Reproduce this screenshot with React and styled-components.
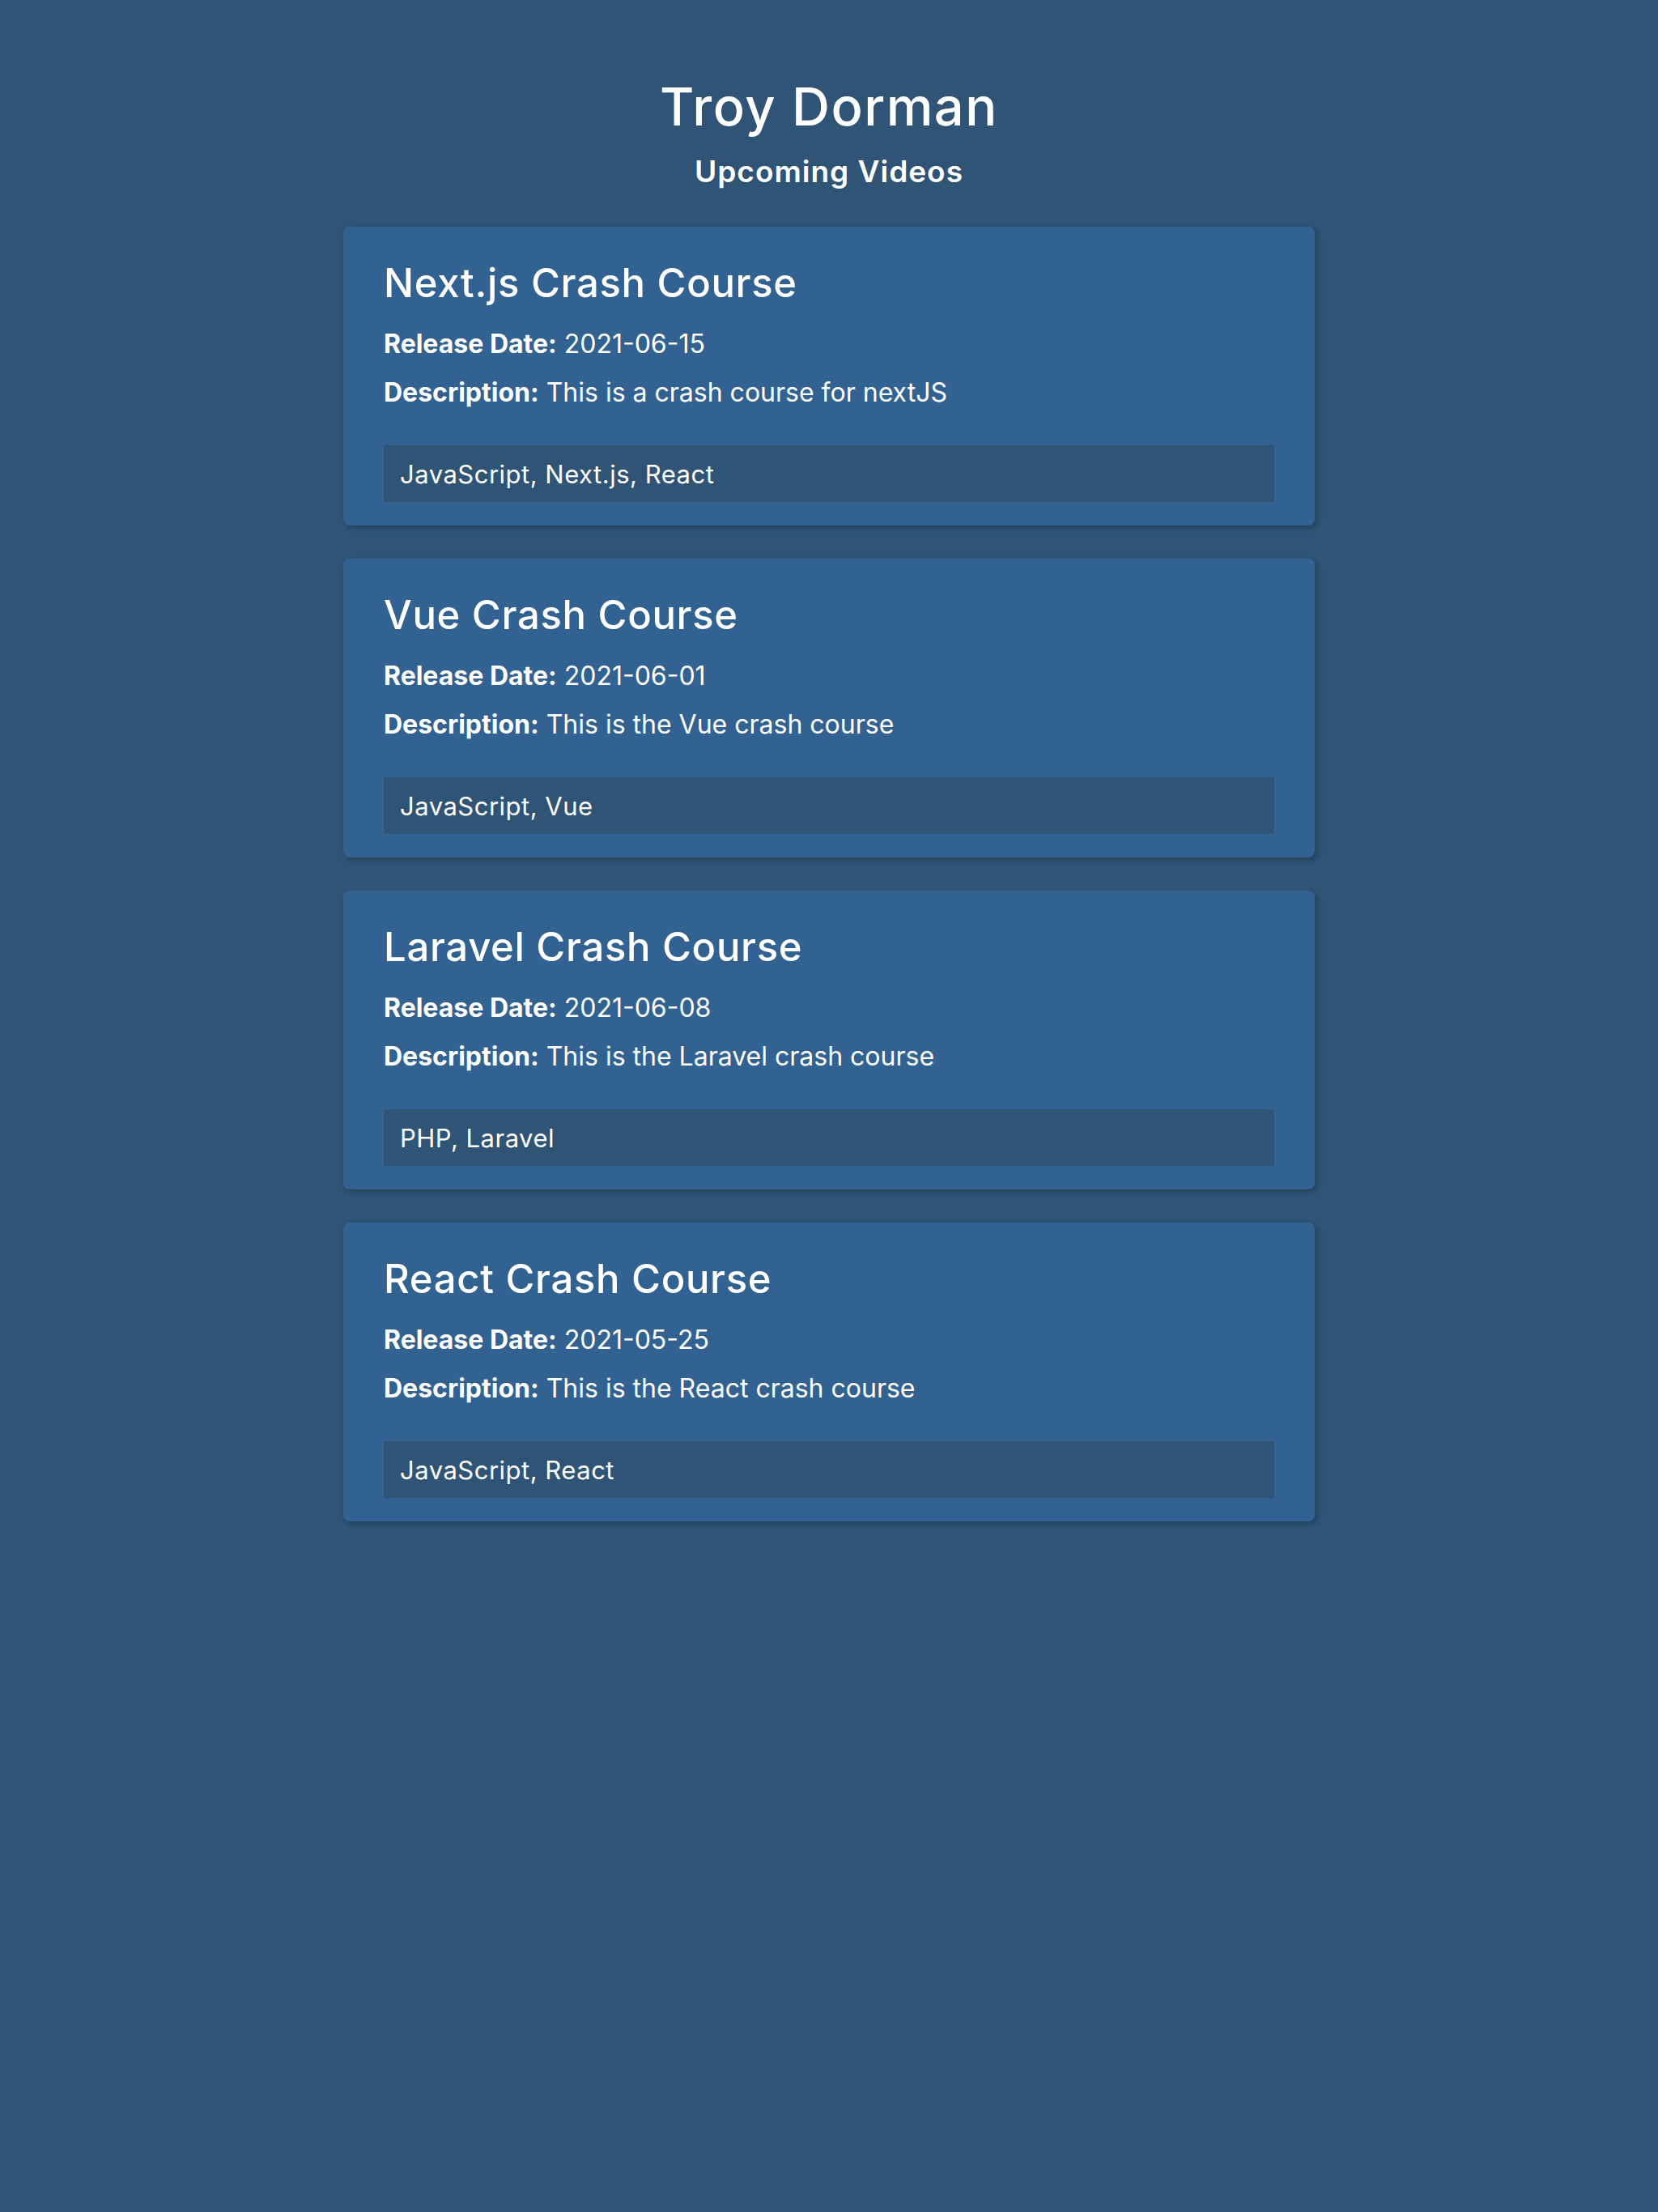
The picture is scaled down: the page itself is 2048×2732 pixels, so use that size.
import styled, { createGlobalStyle } from 'styled-components';

const GlobalStyle = createGlobalStyle`
  html {
    font-family: Inter, "DejaVu Sans", sans-serif;
  }
  body {
    margin: 0;
    background-color: #2f5476;
    color: #ffffff;
    min-height: 100vh;
  }
`;

const videos = [
  {
    title: 'Next.js Crash Course',
    date: '2021-06-15',
    description: 'This is a crash course for nextJS',
    tags: 'JavaScript, Next.js, React',
  },
  {
    title: 'Vue Crash Course',
    date: '2021-06-01',
    description: 'This is the Vue crash course',
    tags: 'JavaScript, Vue',
  },
  {
    title: 'Laravel Crash Course',
    date: '2021-06-08',
    description: 'This is the Laravel crash course',
    tags: 'PHP, Laravel',
  },
  {
    title: 'React Crash Course',
    date: '2021-05-25',
    description: 'This is the React crash course',
    tags: 'JavaScript, React',
  },
];

export default function App() {
  return (
    <>
      <GlobalStyle />
      <Wrapper>
        <Header>
          <Name>Troy Dorman</Name>
          <Subtitle>Upcoming Videos</Subtitle>
        </Header>
        <List>
          {videos.map((v) => (
            <Card key={v.title}>
              <CardTitle>{v.title}</CardTitle>
              <Field>
                <strong>Release Date:</strong> {v.date}
              </Field>
              <Field>
                <strong>Description:</strong> {v.description}
              </Field>
              <Tags>{v.tags}</Tags>
            </Card>
          ))}
        </List>
      </Wrapper>
    </>
  );
}

const Wrapper = styled.div`
  max-width: 1200px;
  margin: 0 auto;
  padding-top: 92px;
`;

const Header = styled.header`
  display: flex;
  flex-direction: column;
  align-items: center;
`;

const Name = styled.h1`
  margin: 0;
  font-size: 65px;
  font-weight: 500;
  line-height: 80px;
  letter-spacing: 1.5px;
`;

const Subtitle = styled.h3`
  margin: 12px 0 0;
  font-size: 37px;
  font-weight: 600;
  line-height: 56px;
  letter-spacing: 1px;
`;

const List = styled.div`
  display: flex;
  flex-direction: column;
  gap: 41px;
  margin-top: 40px;
`;

const Card = styled.div`
  background-color: #316291;
  border-radius: 8px;
  padding: 40px 50px 29px;
  box-shadow: 3px 3px 6px rgba(0, 0, 0, 0.22);
`;

const CardTitle = styled.h2`
  margin: 0 0 25px;
  font-size: 49px;
  font-weight: 500;
  line-height: 60px;
  letter-spacing: 0.7px;
`;

const Field = styled.p`
  margin: 0;
  font-size: 32px;
  line-height: 40px;
  & + & {
    margin-top: 20px;
  }
  strong {
    font-weight: 700;
  }
`;

const Tags = styled.div`
  margin-top: 45px;
  background-color: #2f5476;
  padding: 0 20px;
  height: 70px;
  display: flex;
  align-items: center;
  font-size: 31px;
  letter-spacing: 0.5px;
`;
